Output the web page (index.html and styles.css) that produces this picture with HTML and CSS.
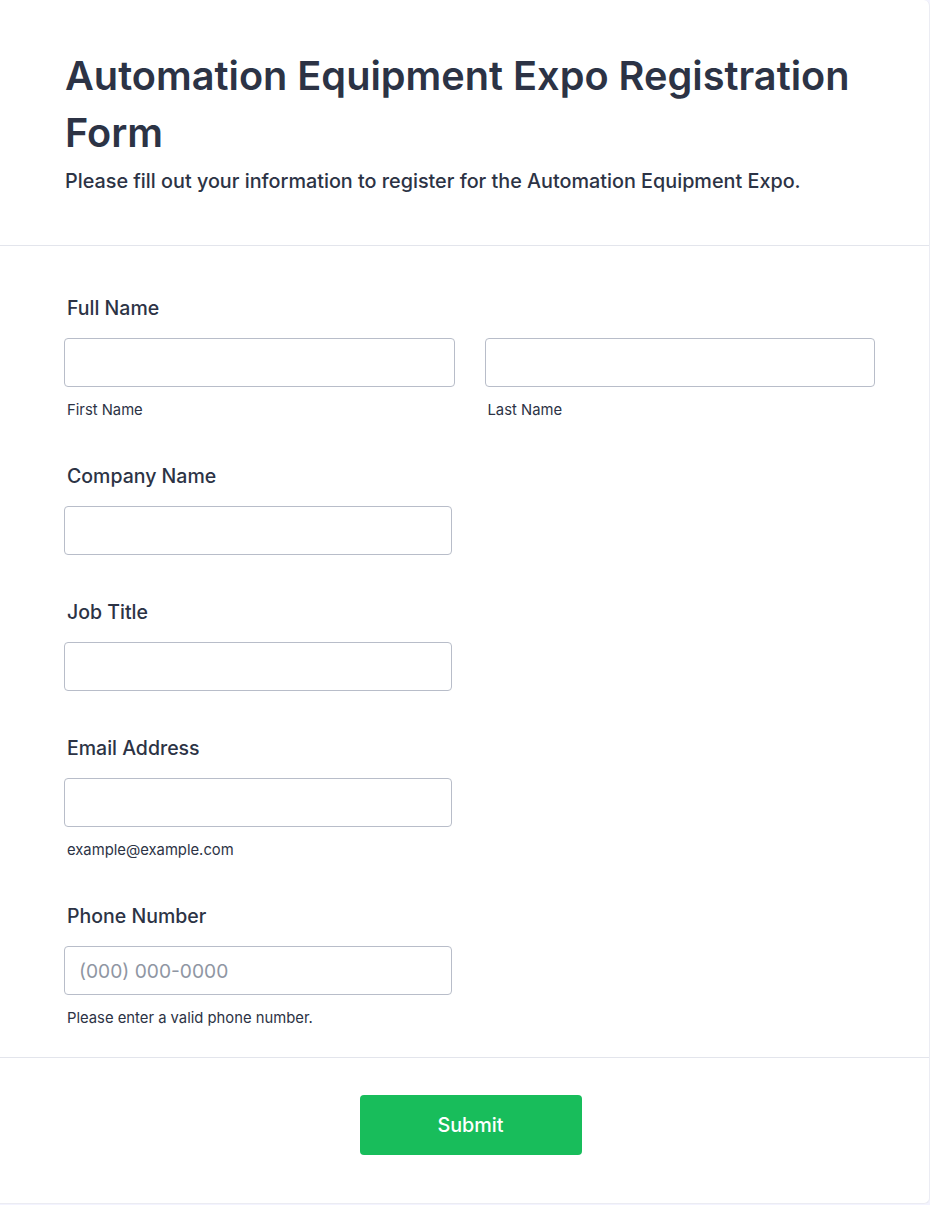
FILE: index.html
```html
<!DOCTYPE html>
<html lang="en">
<head>
<meta charset="utf-8">
<title>Automation Equipment Expo Registration Form</title>
<link rel="stylesheet" href="styles.css">
</head>
<body>
<div class="card">
  <header class="header">
    <h1 class="title">Automation Equipment Expo Registration Form</h1>
    <p class="subtitle">Please fill out your information to register for the Automation Equipment Expo.</p>
  </header>
  <form class="form">
    <div class="field">
      <label class="label">Full Name</label>
      <div class="name-row">
        <div class="name-col">
          <input class="input" type="text">
          <span class="sublabel">First Name</span>
        </div>
        <div class="name-col">
          <input class="input" type="text">
          <span class="sublabel">Last Name</span>
        </div>
      </div>
    </div>
    <div class="field">
      <label class="label">Company Name</label>
      <input class="input single" type="text">
    </div>
    <div class="field">
      <label class="label">Job Title</label>
      <input class="input single" type="text">
    </div>
    <div class="field">
      <label class="label">Email Address</label>
      <input class="input single" type="email">
      <span class="sublabel">example@example.com</span>
    </div>
    <div class="field last">
      <label class="label">Phone Number</label>
      <input class="input single" type="tel" placeholder="(000) 000-0000">
      <span class="sublabel">Please enter a valid phone number.</span>
    </div>
  </form>
  <div class="footer">
    <button class="submit" type="button">Submit</button>
  </div>
</div>
</body>
</html>
```
FILE: styles.css
```css
* { box-sizing: border-box; }
html, body {
  margin: 0;
  padding: 0;
  background: #f3f3fe;
}
body {
  font-family: Inter, "Noto Sans", sans-serif;
  color: #2c3345;
}
.card {
  width: 930px;
  min-height: 1204px;
  background: #fff;
  border-right: 1px solid #ebecf3;
  border-bottom: 1px solid #ebecf3;
  border-radius: 0 6px 6px 0;
}
.header {
  padding: 48px 64px 0 64px;
  height: 246px;
  border-bottom: 1px solid #e3e5ec;
}
.title {
  margin: 0;
  font-size: 39.7px;
  line-height: 57px;
  font-weight: 600;
  padding-left: 1px;
}
.subtitle {
  margin: 5px 0 0 0;
  font-size: 19.8px;
  line-height: 28px;
  font-weight: 500;
  padding-left: 1px;
}
.form {
  padding: 50px 54px 30px 64px;
  border-bottom: 1px solid #e3e5ec;
}
.field {
  display: flex;
  flex-direction: column;
  align-items: flex-start;
  margin-bottom: 45px;
}
.field.last { margin-bottom: 0; }
.label {
  font-size: 19.5px;
  line-height: 24px;
  font-weight: 500;
  margin: 0 0 18px 3px;
}
.name-row {
  display: flex;
  gap: 30px;
  width: 811px;
}
.name-col {
  flex: 1;
  display: flex;
  flex-direction: column;
}
.input {
  width: 100%;
  height: 49px;
  border: 1px solid #b8bdc9;
  border-radius: 4px;
  background: #fff;
  font-family: inherit;
  font-size: 19.2px;
  padding: 0 14px;
  color: #2c3345;
}
.input.single { width: 388px; }
.input::placeholder { color: #8f96a3; }
.sublabel {
  font-size: 14.8px;
  line-height: 17px;
  margin: 15px 0 0 3px;
  color: #2c3345;
}
.footer {
  display: flex;
  justify-content: center;
  padding: 37px 0 48px 0;
}
.submit {
  width: 222px;
  height: 60px;
  margin-left: 12px;
  background: #18bd5b;
  color: #fff;
  border: none;
  border-radius: 4px;
  font-family: inherit;
  font-size: 19.8px;
  font-weight: 500;
}
```
